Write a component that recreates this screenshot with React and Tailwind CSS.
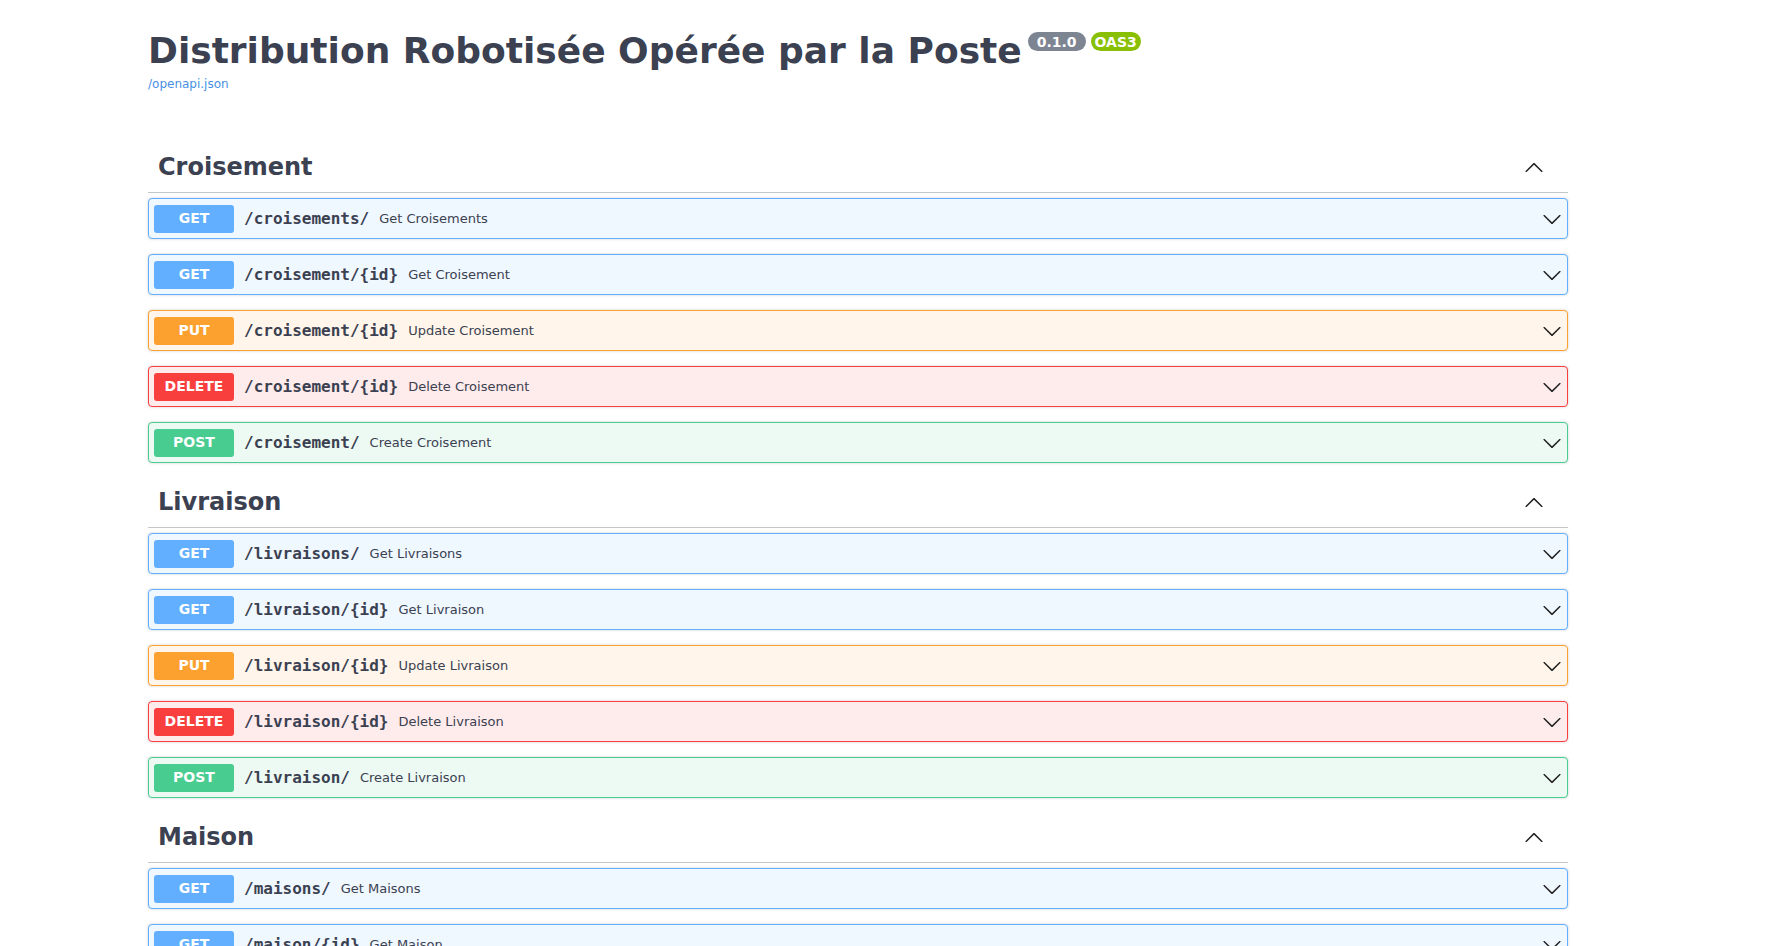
import React from "react";

const methods = {
  GET: { badge: "bg-[#61affe]", box: "bg-[#eff7ff] border-[#61affe]" },
  PUT: { badge: "bg-[#fca130]", box: "bg-[#fff5ea] border-[#fca130]" },
  DELETE: { badge: "bg-[#f93e3e]", box: "bg-[#feebeb] border-[#f93e3e]" },
  POST: { badge: "bg-[#49cc90]", box: "bg-[#edfaf4] border-[#49cc90]" },
};

const sections = [
  {
    name: "Croisement",
    ops: [
      ["GET", "/croisements/", "Get Croisements"],
      ["GET", "/croisement/{id}", "Get Croisement"],
      ["PUT", "/croisement/{id}", "Update Croisement"],
      ["DELETE", "/croisement/{id}", "Delete Croisement"],
      ["POST", "/croisement/", "Create Croisement"],
    ],
  },
  {
    name: "Livraison",
    ops: [
      ["GET", "/livraisons/", "Get Livraisons"],
      ["GET", "/livraison/{id}", "Get Livraison"],
      ["PUT", "/livraison/{id}", "Update Livraison"],
      ["DELETE", "/livraison/{id}", "Delete Livraison"],
      ["POST", "/livraison/", "Create Livraison"],
    ],
  },
  {
    name: "Maison",
    ops: [
      ["GET", "/maisons/", "Get Maisons"],
      ["GET", "/maison/{id}", "Get Maison"],
      ["PUT", "/maison/{id}", "Update Maison"],
      ["DELETE", "/maison/{id}", "Delete Maison"],
      ["POST", "/maison/", "Create Maison"],
    ],
  },
];

function ArrowDown() {
  return (
    <svg width="20" height="20" viewBox="0 0 20 20" className="fill-[#1f1f1f] shrink-0">
      <path d="M17.418 6.109c.272-.268.709-.268.979 0s.271.701 0 .969l-7.908 7.83c-.27.268-.707.268-.979 0l-7.908-7.83c-.27-.268-.27-.701 0-.969.271-.268.709-.268.979 0L10 13.25l7.418-7.141z" />
    </svg>
  );
}

function ArrowUp() {
  return (
    <svg width="20" height="20" viewBox="0 0 20 20" className="fill-[#1f1f1f] shrink-0">
      <path d="M17.418 14.908c.272.268.709.268.979 0s.271-.701 0-.969l-7.908-7.83c-.27-.268-.707-.268-.979 0l-7.908 7.83c-.27.268-.27.701 0 .969.271.268.709.268.979 0L10 7.767l7.418 7.141z" />
    </svg>
  );
}

function Op({ method, path, summary }) {
  const m = methods[method];
  return (
    <div
      className={`flex items-center h-[41px] mb-[15px] border border-solid rounded-[4px] shadow-[0_0_3px_rgba(0,0,0,0.19)] px-[5px] ${m.box}`}
    >
      <span
        className={`w-[80px] h-[28px] flex items-center justify-center rounded-[3px] text-white text-[14px] font-bold shrink-0 ${m.badge}`}
      >
        {method}
      </span>
      <span className="px-[10px] font-['DejaVu_Sans_Mono',monospace] font-bold text-[16px] text-[#3b4151] whitespace-nowrap">
        {path}
      </span>
      <span className="text-[13px] text-[#3b4151] whitespace-nowrap">{summary}</span>
      <span className="ml-auto flex items-center">
        <ArrowDown />
      </span>
    </div>
  );
}

export default function App() {
  return (
    <div className="bg-white min-h-screen h-[946px] overflow-hidden font-['DejaVu_Sans',sans-serif] text-[#3b4151]">
      <div className="ml-[148px] w-[1420px] pt-[30px]">
        <div className="h-[113px]">
          <h2 className="flex items-start text-[36px] leading-[42px] font-bold text-[#3b4151]">
            <span>Distribution Robotisée Opérée par la Poste</span>
            <span className="flex items-center gap-[5px] ml-[6px] mt-[2px]">
              <span className="h-[19px] px-[9px] flex items-center rounded-full bg-[#7d8492] text-white text-[14px] leading-none font-bold">
                0.1.0
              </span>
              <span className="h-[19px] px-[4px] flex items-center rounded-full bg-[#89bf04] text-white text-[14px] leading-none font-bold">
                OAS3
              </span>
            </span>
          </h2>
          <a className="block mt-[5px] text-[12px] leading-[14px] text-[#4990e2]">/openapi.json</a>
        </div>
        {sections.map((s) => (
          <div key={s.name}>
            <div className="flex items-center justify-between h-[50px] pb-[1px] pl-[10px] pr-[24px] border-b border-solid border-[rgba(59,65,81,0.3)] mb-[5px]">
              <h3 className="text-[24px] font-bold text-[#3b4151]">{s.name}</h3>
              <ArrowUp />
            </div>
            {s.ops.map(([m, p, d]) => (
              <Op key={m + p} method={m} path={p} summary={d} />
            ))}
          </div>
        ))}
      </div>
    </div>
  );
}
